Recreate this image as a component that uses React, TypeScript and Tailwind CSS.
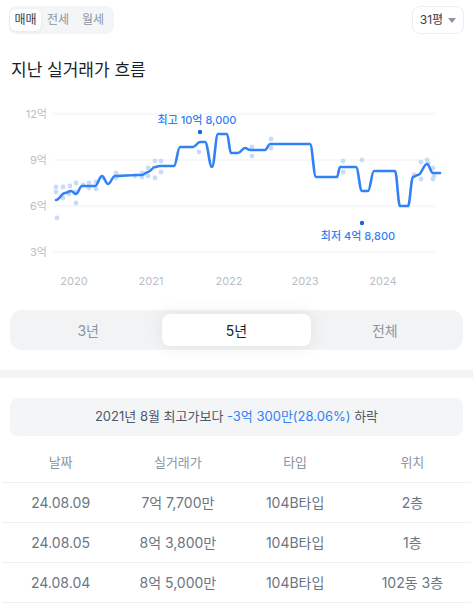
import React from "react";

const line: [number, number][] = [
  [56, 200], [65, 193], [71, 191], [76, 194], [82, 186], [95, 186], [102, 176], [108, 184],
  [115, 176], [137, 175], [142, 175], [148, 172], [155, 167], [160, 166], [174, 166], [180, 147],
  [193, 147], [200, 142], [205, 142], [212, 167], [218, 134], [227, 134], [231, 153], [238, 153],
  [245, 148], [250, 150], [265, 150], [270, 144], [310, 144], [316, 177], [337, 177], [340, 167],
  [356, 167], [362, 191], [368, 191], [374, 171], [395, 171], [400, 206], [408, 206], [413, 177],
  [418, 175], [427, 164], [433, 173], [440, 173],
];

const dots: [number, number][] = [
  [56, 187], [56, 192], [63, 187], [63, 198], [70, 186], [69, 194], [76, 183], [76, 192], [76, 203],
  [57, 218], [83, 185], [89, 183], [89, 188], [96, 182], [96, 189], [103, 178], [116, 173], [116, 178],
  [135, 176], [142, 173], [142, 177], [148, 168], [148, 176], [155, 161], [155, 178], [161, 161],
  [161, 172], [199, 152], [252, 147], [252, 156], [271, 139], [271, 148], [343, 161], [343, 172],
  [362, 160], [414, 175], [421, 162], [421, 179], [427, 160], [428, 163], [433, 168], [433, 179],
  [434, 176],
];

const smooth = (pts: [number, number][]) => {
  let d = `M${pts[0][0]},${pts[0][1]}`;
  for (let i = 1; i < pts.length; i++) {
    const [x0, y0] = pts[i - 1];
    const [x1, y1] = pts[i];
    const k = (x1 - x0) * 0.4;
    d += ` C${x0 + k},${y0} ${x1 - k},${y1} ${x1},${y1}`;
  }
  return d;
};

const PriceChart = () => {
  const grid = [
    { y: 114, label: "12억" },
    { y: 160, label: "9억" },
    { y: 206, label: "6억" },
    { y: 252, label: "3억" },
  ];
  const years = [
    { x: 74, label: "2020" },
    { x: 151, label: "2021" },
    { x: 229, label: "2022" },
    { x: 305, label: "2023" },
    { x: 383, label: "2024" },
  ];
  return (
    <svg viewBox="0 95 473 200" className="block w-[473px] h-[200px]">
      {grid.map((g) => (
        <g key={g.label}>
          <line x1={53} x2={435} y1={g.y} y2={g.y} stroke="#f0f1f3" strokeWidth={1} />
          <text x={47} y={g.y + 4} textAnchor="end" fontSize={11} fill="#b9bec6">
            {g.label}
          </text>
        </g>
      ))}
      {years.map((y) => (
        <text key={y.label} x={y.x} y={285} textAnchor="middle" fontSize={11} fill="#b9bec6">
          {y.label}
        </text>
      ))}
      {dots.map(([x, y], i) => (
        <circle key={i} cx={x} cy={y} r={2.4} fill="#c7dcfb" />
      ))}
      <path d={smooth(line)} fill="none" stroke="#3182f6" strokeWidth={2.6} strokeLinejoin="round" strokeLinecap="round" />
      <circle cx={200} cy={132} r={2.2} fill="#1b64da" />
      <text x={197} y={124} textAnchor="middle" fontSize={11} fontWeight={500} fill="#3182f6">
        최고 10억 8,000
      </text>
      <circle cx={362} cy={223} r={2.2} fill="#1b64da" />
      <text x={358} y={240} textAnchor="middle" fontSize={11} fontWeight={500} fill="#3182f6">
        최저 4억 8,800
      </text>
    </svg>
  );
};

const rows = [
  ["24.08.09", "7억 7,700만", "104B타입", "2층"],
  ["24.08.05", "8억 3,800만", "104B타입", "1층"],
  ["24.08.04", "8억 5,000만", "104B타입", "102동 3층"],
];

export default function App() {
  return (
    <div className="w-[473px] h-[604px] overflow-hidden bg-white font-['Inter','Noto_Sans_CJK_KR',sans-serif]">
      <div className="flex justify-between items-start px-[9px] pt-[6px]">
        <div className="flex items-center h-[28px] rounded-lg bg-[#f4f5f7] pl-[1px] pr-[3px] text-[12px]">
          <button className="h-[22px] w-[31px] rounded-md bg-white text-[#333d4b] shadow-[0_1px_4px_rgba(0,0,0,0.06)]">
            매매
          </button>
          <button className="h-[22px] w-[34px] text-[#8b95a1]">전세</button>
          <button className="h-[22px] w-[36px] text-[#8b95a1]">월세</button>
        </div>
        <button className="flex items-center gap-[5px] h-[28px] w-[52px] justify-center rounded-lg border border-[#eceef1] text-[12px] text-[#333d4b]">
          31평
          <svg width="8" height="5" viewBox="0 0 8 5">
            <path d="M0 0h8L4 5z" fill="#8b95a1" />
          </svg>
        </button>
      </div>

      <h2 className="mt-[24px] px-[11px] text-[17px] leading-[24px] text-[#191f28]">지난 실거래가 흐름</h2>

      <div className="mt-[13px]">
        <PriceChart />
      </div>

      <div className="mx-[10px] mt-[15px] h-[40px] rounded-xl bg-[#f2f3f5] p-[4px] flex text-[14px]">
        <button className="flex-1 text-[#8b95a1]">3년</button>
        <button className="flex-1 rounded-lg bg-white text-[#191f28] shadow-[0_0_18px_rgba(0,0,0,0.08)]">5년</button>
        <button className="flex-1 text-[#8b95a1]">전체</button>
      </div>

      <div className="mt-[20px] h-[8px] bg-[#f2f3f5]" />

      <div className="mx-[10px] mt-[20px] h-[38px] rounded-lg bg-[#f4f5f7] flex items-center justify-center text-[13px] text-[#4e5968]">
        2021년 8월 최고가보다&nbsp;<span className="text-[#3182f6]">-3억 300만(28.06%)</span>&nbsp;하락
      </div>

      <div className="mx-[2px] mt-[7px]">
        <div className="grid grid-cols-4 h-[40px] items-center border-b border-[#eef0f2] text-center text-[13px] text-[#8b95a1]">
          <div>날짜</div>
          <div>실거래가</div>
          <div>타입</div>
          <div>위치</div>
        </div>
        {rows.map((r) => (
          <div
            key={r[0]}
            className="grid grid-cols-4 h-[40px] items-center border-b border-[#eef0f2] text-center text-[14px] text-[#6b7684]"
          >
            {r.map((c) => (
              <div key={c}>{c}</div>
            ))}
          </div>
        ))}
      </div>
    </div>
  );
}
